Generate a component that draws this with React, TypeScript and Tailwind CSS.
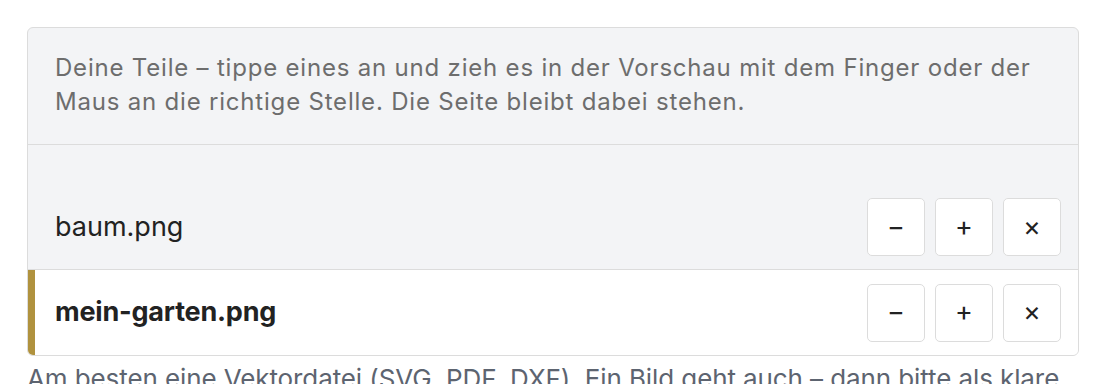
const parts = [
  { name: "baum.png", active: false },
  { name: "mein-garten.png", active: true },
];

function PartRow({ name, active }: { name: string; active: boolean }) {
  return (
    <div
      className={`flex items-center justify-between h-[85px] pr-[17px] ${
        active ? "bg-white border-l-[7px] border-[#b0923e] pl-[20px]" : "pl-[27px] border-b border-[#dcdcdc]"
      }`}
    >
      <span className={`text-[27px] text-[#222] ${active ? "font-bold tracking-[-0.2px]" : ""}`}>{name}</span>
      <div className="flex gap-[10px]">
        {["−", "+", "×"].map((s) => (
          <button
            key={s}
            className="w-[58px] h-[58px] bg-white border border-[#dcdcdc] rounded-[5px] text-[27px] text-[#222] flex items-center justify-center"
          >
            {s}
          </button>
        ))}
      </div>
    </div>
  );
}

export default function App() {
  return (
    <div className="bg-white w-[1106px] h-[384px] overflow-hidden pt-[27px] pl-[27px] font-['Inter',sans-serif]">
      <div className="w-[1052px] border border-[#dcdcdc] rounded-[6px] bg-[#f3f4f6] overflow-hidden">
        <div className="px-[27px] pt-[23px] pb-[25px] border-b border-[#dcdcdc] text-[24px] leading-[34px] text-[#6d6d6d] tracking-[0.8px]">
          Deine Teile – tippe eines an und zieh es in der Vorschau mit dem Finger oder der Maus an die richtige
          Stelle. Die Seite bleibt dabei stehen.
        </div>
        <div className="pt-[40px]">
          {parts.map((p) => (
            <PartRow key={p.name} {...p} />
          ))}
        </div>
      </div>
      <p className="mt-[5px] whitespace-nowrap text-[26px] leading-[36px] tracking-[-0.1px] text-[#5d6470]">
        Am besten eine Vektordatei (SVG, PDF, DXF). Ein Bild geht auch – dann bitte als klare
      </p>
    </div>
  );
}
